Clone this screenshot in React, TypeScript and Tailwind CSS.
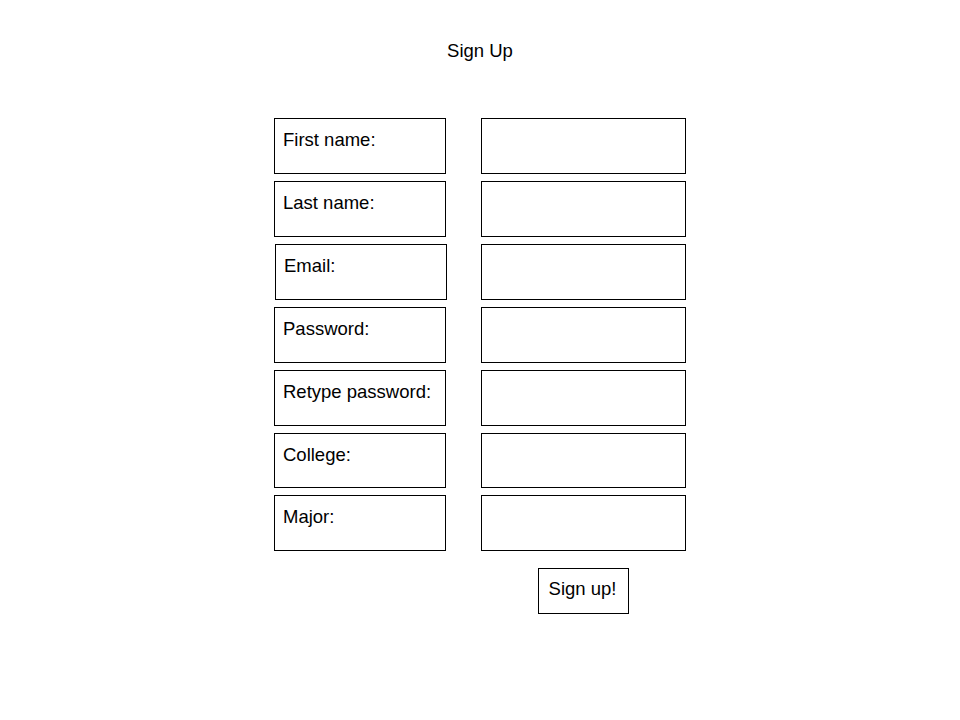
const fields = ["First name:", "Last name:", "Email:", "Password:", "Retype password:", "College:", "Major:"];

export default function App() {
  return (
    <main
      className="min-h-[720px] w-full bg-white text-black"
      style={{ fontFamily: '"Liberation Sans", Arial, sans-serif' }}
    >
      <h1 className="pt-[40px] text-center text-[18.5px] font-normal leading-[21px]">Sign Up</h1>

      <div className="mx-auto mt-[57px] flex w-[412px] flex-col gap-[7px]">
        {fields.map((label) => (
          <div key={label} className="flex gap-[35px]">
            <div
              className={
                "w-[172px] border border-black pl-[8px] pt-[10px] text-[18.5px] leading-[21px] " +
                (label === "College:" ? "h-[55px] " : "h-[56px] ") +
                (label === "Email:" ? "ml-px -mr-px" : "")
              }
            >
              {label}
            </div>
            <div className={"w-[205px] border border-black " + (label === "College:" ? "h-[55px]" : "h-[56px]")} />
          </div>
        ))}
        <div className="mt-[10px] flex">
          <div className="w-[207px]" />
          <div className="flex w-[205px] justify-center">
            <button className="flex h-[46px] w-[91px] items-start justify-center self-start border border-black bg-white pr-[2px] pt-[9px] text-center text-[18.5px] leading-[21px]">
              Sign up!
            </button>
          </div>
        </div>
      </div>
    </main>
  );
}
